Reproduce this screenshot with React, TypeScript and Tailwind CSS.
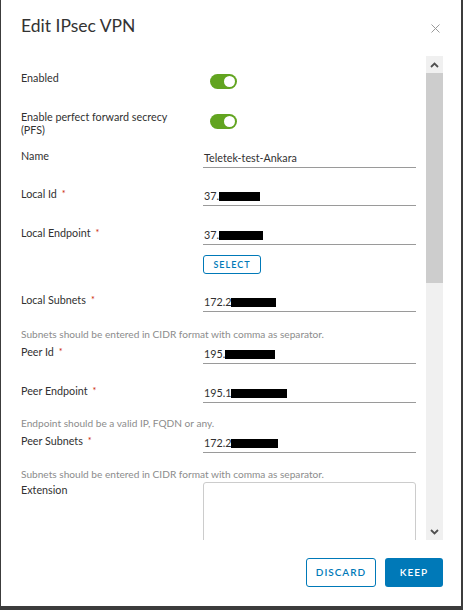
import React from "react";

const font = { fontFamily: "Lato, 'Noto Sans', sans-serif" };

function Req() {
  return <span className="ml-[5px] text-[#c92100] text-[9px] align-top">*</span>;
}

function Toggle() {
  return (
    <div className="ml-[7px] mt-[3px] w-[27px] h-[15px] rounded-full bg-[#62a420] flex items-center justify-end pr-[2px]">
      <div className="w-[11px] h-[11px] rounded-full bg-white" />
    </div>
  );
}

function Field({
  label,
  req,
  prefix,
  black,
  value,
  className,
}: {
  label: string;
  req?: boolean;
  prefix?: string;
  black?: number;
  value?: string;
  className?: string;
}) {
  return (
    <div className={"flex items-start " + (className ?? "")}>
      <div className="w-[182px] leading-[14px] text-[#313131]">
        {label}
        {req && <Req />}
      </div>
      <div className="mt-[2px] w-[213px] border-b border-[#9a9a9a] pb-[2px] pl-[1px] leading-[14px] text-[#313131] flex items-center">
        {value ?? prefix}
        {black ? <span className="inline-block h-[9px] bg-black" style={{ width: black }} /> : null}
      </div>
    </div>
  );
}

function Helper({ text, className }: { text: string; className?: string }) {
  return <div className={"leading-[14px] text-[10.15px] text-[#8c8c8c] " + (className ?? "")}>{text}</div>;
}

export default function App() {
  return (
    <div className="w-[463px] h-[610px] bg-[#3c3c3c] pl-[1px] pr-[2px] pb-[4px]" style={font}>
      <div className="bg-white h-[606px] flex flex-col">
        <div className="h-[56px] flex items-start justify-between pl-[20px] pr-[21px] pt-[13px]">
          <div className="text-[17.5px] font-normal text-[#333333] leading-[26px]">Edit IPsec VPN</div>
          <svg width="9" height="9" viewBox="0 0 9 9" className="mt-[11px]">
            <path d="M0.5 0.5 L8.5 8.5 M8.5 0.5 L0.5 8.5" stroke="#9a9a9a" strokeWidth="1" />
          </svg>
        </div>
        <div className="h-[484px] flex">
          <div className="flex-1 overflow-hidden pl-[20px] text-[10.75px]">
            <div className="pt-[15px] flex items-start">
              <div className="w-[182px] leading-[14px] text-[#313131]">Enabled</div>
              <Toggle />
            </div>
            <div className="mt-[21px] flex items-start">
              <div className="w-[182px] leading-[13px] text-[#313131]">
                Enable perfect forward secrecy
                <br />
                (PFS)
              </div>
              <div className="mt-[1px]">
                <Toggle />
              </div>
            </div>
            <Field className="mt-[13px]" label="Name" value="Teletek-test-Ankara" />
            <Field className="mt-[19px]" label="Local Id" req prefix="37." black={41} />
            <Field className="mt-[20px]" label="Local Endpoint" req prefix="37." black={44} />
            <div className="mt-[10px] ml-[182px]">
              <div className="w-[58px] h-[19px] border border-[#0079b8] rounded-[3px] text-[#0079b8] text-[9px] tracking-[1px] font-semibold flex items-center justify-center">
                SELECT
              </div>
            </div>
            <Field className="mt-[19px]" label="Local Subnets" req prefix="172.2" black={45} />
            <Helper className="mt-[15px]" text="Subnets should be entered in CIDR format with comma as separator." />
            <Field className="mt-[4px]" label="Peer Id" req prefix="195." black={50} />
            <Field className="mt-[20px]" label="Peer Endpoint" req prefix="195.1" black={56} />
            <Helper className="mt-[13px]" text="Endpoint should be a valid IP, FQDN or any." />
            <Field className="mt-[4px]" label="Peer Subnets" req prefix="172.2" black={47} />
            <Helper className="mt-[14px]" text="Subnets should be entered in CIDR format with comma as separator." />
            <div className="mt-[0px] flex items-start">
              <div className="w-[182px] leading-[14px] text-[#313131] pt-[2px]">Extension</div>
              <div className="mt-[1px] w-[213px] h-[80px] border border-[#cccccc] rounded-[3px]" />
            </div>
          </div>
          <div className="w-[17px] mr-[18px] ml-[10px] bg-[#f0f0f0] flex flex-col">
            <div className="h-[17px] flex items-center justify-center">
              <svg width="9" height="6" viewBox="0 0 9 6">
                <path d="M1 5 L4.5 1.5 L8 5" stroke="#505050" strokeWidth="1.8" fill="none" />
              </svg>
            </div>
            <div className="h-[210px] bg-[#cdcdcd]" />
            <div className="flex-1" />
            <div className="h-[17px] flex items-center justify-center">
              <svg width="9" height="6" viewBox="0 0 9 6">
                <path d="M1 1 L4.5 4.5 L8 1" stroke="#505050" strokeWidth="1.8" fill="none" />
              </svg>
            </div>
          </div>
        </div>
        <div className="flex justify-end gap-[9px] pr-[18px] pt-[18px]">
          <div className="w-[70px] h-[29px] border border-[#0079b8] rounded-[3px] text-[#0079b8] text-[10px] tracking-[1px] font-semibold flex items-center justify-center">
            DISCARD
          </div>
          <div className="w-[58px] h-[29px] bg-[#0079b8] rounded-[3px] text-white text-[10px] tracking-[1px] font-semibold flex items-center justify-center">
            KEEP
          </div>
        </div>
      </div>
    </div>
  );
}
